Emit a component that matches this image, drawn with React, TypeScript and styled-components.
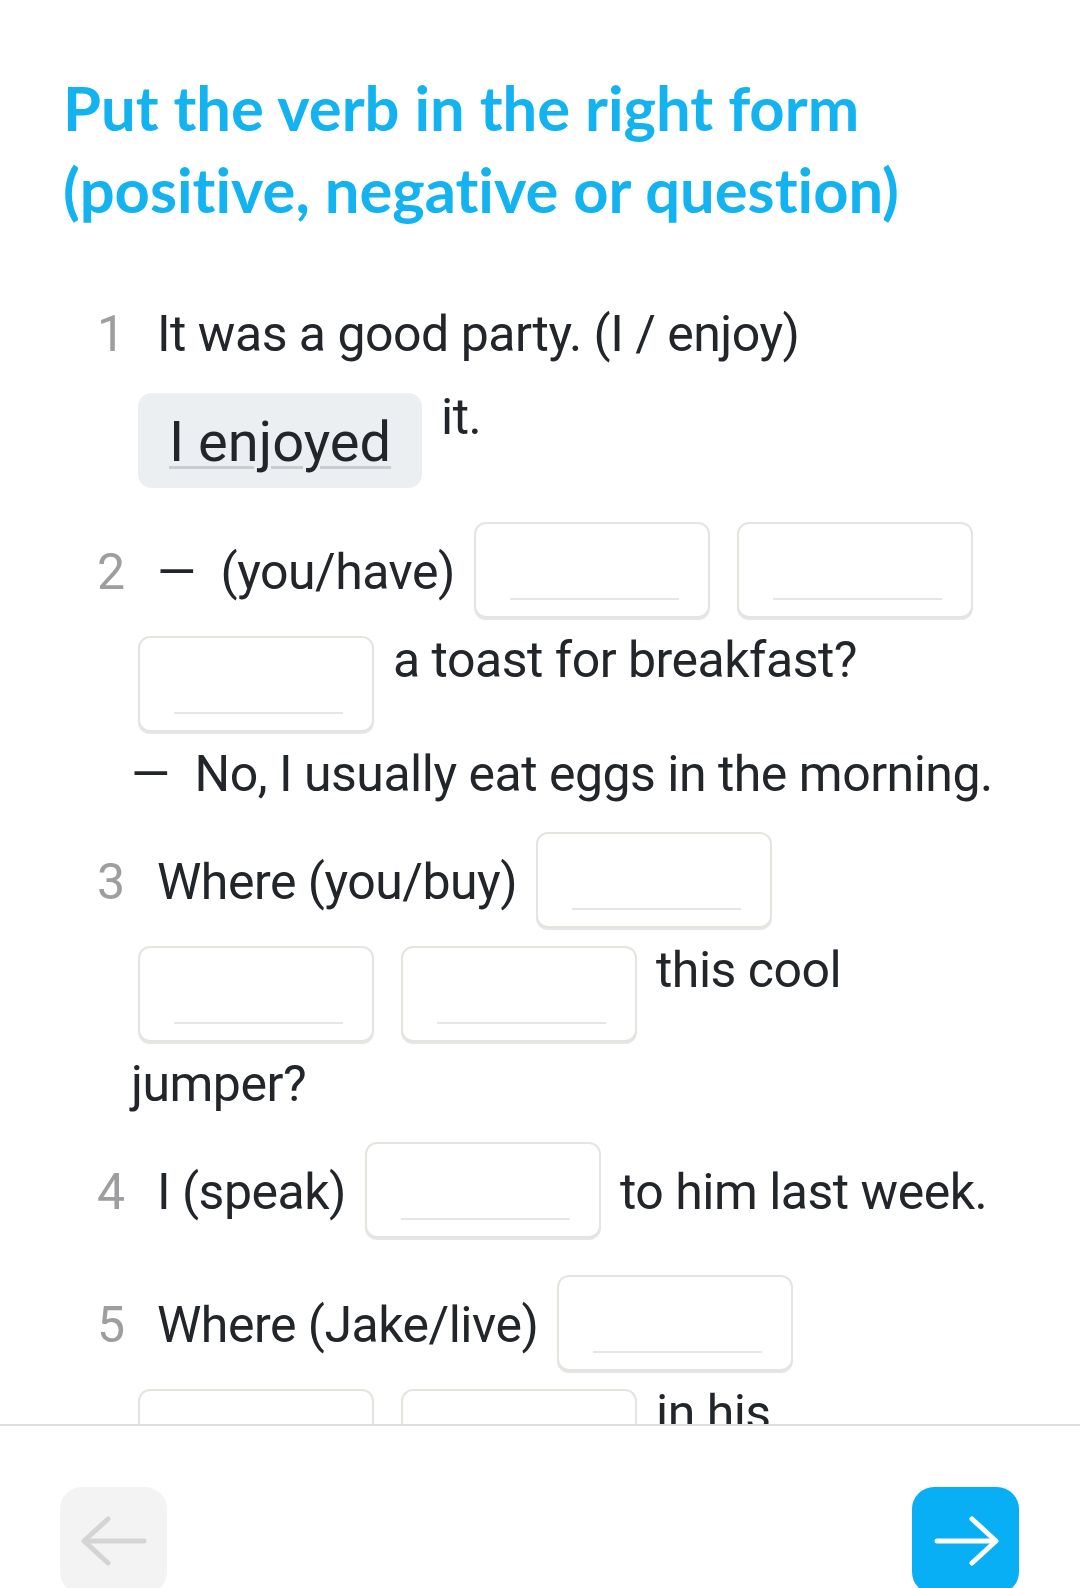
import React from "react";
import styled, { createGlobalStyle } from "styled-components";

const GlobalStyle = createGlobalStyle`
  html, body { margin: 0; padding: 0; background: #ffffff; }
  body { font-family: "Roboto", "Liberation Sans", sans-serif; }
  * { box-sizing: border-box; }
`;

const Page = styled.div`
  height: 100vh;
  display: flex;
  flex-direction: column;
  background: #ffffff;
  overflow: hidden;
`;

const Scroll = styled.main`
  flex: 1;
  overflow: hidden;
  padding: 66px 0 0 63px;
`;

const Title = styled.h1`
  margin: 0;
  font-family: "Lato", "Open Sans", sans-serif;
  font-weight: 700;
  font-size: 61.5px;
  line-height: 82px;
  color: #13b2f1;
  letter-spacing: 0;
  font-variant-ligatures: none;
  white-space: nowrap;
`;

const List = styled.div`
  display: flex;
  flex-direction: column;
  gap: 34px;
  margin-top: 60px;
`;

const Item = styled.section`
  display: flex;
  flex-direction: column;
  gap: 15px;
  padding-left: 75px;
`;

const Line = styled.div<{ $align: "center" | "start" }>`
  display: flex;
  flex-wrap: nowrap;
  column-gap: 19px;
  align-items: ${(p) => (p.$align === "center" ? "center" : "flex-start")};
  min-height: ${(p) => (p.$align === "center" ? "88px" : "0")};
`;

const Num = styled.span`
  flex-shrink: 0;
  width: 24px;
  margin-left: -41px;
  margin-right: 17px;
  text-align: right;
  font-family: "Roboto", "Liberation Sans", sans-serif;
  font-size: 50px;
  line-height: 48px;
  color: #9d9e9f;
`;

const Words = styled.span<{ $hang?: boolean }>`
  flex-shrink: 0;
  margin-left: ${(p) => (p.$hang ? "-7px" : "0")};
  font-size: 50px;
  line-height: 48px;
  letter-spacing: -0.5px;
  color: #22262a;
  white-space: nowrap;
`;

const Blank = styled.div`
  flex-shrink: 0;
  width: 236px;
  height: 96px;
  margin-bottom: 3px;
  border: 2px solid #e2e6df;
  border-radius: 12px;
  background: #ffffff;
  box-shadow: 0 2px 0 0 #e6e6e6;
  display: flex;
  flex-direction: column;
  justify-content: flex-end;
  padding: 0 29px 16px 34px;

  & + & {
    margin-left: 8px;
  }
`;

const BlankLine = styled.div`
  height: 2px;
  background: #e6e6e6;
`;

const Answer = styled.div`
  flex-shrink: 0;
  width: 284px;
  height: 95px;
  border-radius: 14px;
  background: #eceff2;
  display: flex;
  align-items: center;
  padding: 3px 0 0 31px;
`;

const AnswerText = styled.span`
  font-size: 56px;
  line-height: 60px;
  letter-spacing: 0;
  color: #22262a;
  text-decoration: underline;
  text-decoration-color: #c9cdd1;
  text-decoration-thickness: 3px;
  text-underline-offset: 5px;
  white-space: nowrap;
`;

const Footer = styled.footer`
  flex-shrink: 0;
  height: 164px;
  border-top: 2px solid #dddddd;
  padding: 61px 61px 0 60px;
  display: flex;
  justify-content: space-between;
  align-items: flex-start;
  overflow: hidden;
  background: #ffffff;
`;

const NavButton = styled.button<{ $primary?: boolean }>`
  flex-shrink: 0;
  width: 107px;
  height: 107px;
  border: none;
  border-radius: 22px;
  padding: 0;
  display: flex;
  align-items: center;
  justify-content: center;
  background: ${(p) => (p.$primary ? "#09aff4" : "#f3f3f3")};
  color: ${(p) => (p.$primary ? "#ffffff" : "#d4d4d4")};
  cursor: pointer;
`;

const Gap = () => (
  <Blank>
    <BlankLine />
  </Blank>
);

const ArrowIcon = ({ dir }: { dir: "left" | "right" }) => (
  <svg width="107" height="107" viewBox="0 0 107 107" fill="none">
    {dir === "right" ? (
      <g stroke="currentColor" strokeWidth="5" strokeLinecap="round" strokeLinejoin="round">
        <path d="M25 54 H83" />
        <path d="M60 32 L84 54 L60 76" />
      </g>
    ) : (
      <g stroke="currentColor" strokeWidth="5" strokeLinecap="round" strokeLinejoin="round">
        <path d="M84 54 H25" />
        <path d="M48 32 L24 54 L48 76" />
      </g>
    )}
  </svg>
);

export default function App() {
  return (
    <>
      <GlobalStyle />
      <Page>
        <Scroll>
          <Title>
            Put the verb in the right form
            <br />
            (positive, negative or question)
          </Title>
          <List>
            <Item>
              <Line $align="center">
                <Num>1</Num>
                <Words>It was a good party. (I / enjoy)</Words>
              </Line>
              <Line $align="start">
                <Answer>
                  <AnswerText>I enjoyed</AnswerText>
                </Answer>
                <Words>it.</Words>
              </Line>
            </Item>

            <Item>
              <Line $align="center">
                <Num>2</Num>
                <Words>{"\u2014\u2002(you/have)"}</Words>
                <Gap />
                <Gap />
              </Line>
              <Line $align="start">
                <Gap />
                <Words>a toast for breakfast?</Words>
              </Line>
              <Line $align="start">
                <Words $hang>{"\u2014\u2002No, I usually eat eggs in the morning."}</Words>
              </Line>
            </Item>

            <Item>
              <Line $align="center">
                <Num>3</Num>
                <Words>Where (you/buy)</Words>
                <Gap />
              </Line>
              <Line $align="start">
                <Gap />
                <Gap />
                <Words>this cool</Words>
              </Line>
              <Line $align="start">
                <Words $hang>jumper?</Words>
              </Line>
            </Item>

            <Item>
              <Line $align="center">
                <Num>4</Num>
                <Words>I (speak)</Words>
                <Gap />
                <Words>to him last week.</Words>
              </Line>
            </Item>

            <Item>
              <Line $align="center">
                <Num>5</Num>
                <Words>Where (Jake/live)</Words>
                <Gap />
              </Line>
              <Line $align="start">
                <Gap />
                <Gap />
                <Words>in his</Words>
              </Line>
            </Item>
          </List>
        </Scroll>
        <Footer>
          <NavButton aria-label="Back">
            <ArrowIcon dir="left" />
          </NavButton>
          <NavButton $primary aria-label="Next">
            <ArrowIcon dir="right" />
          </NavButton>
        </Footer>
      </Page>
    </>
  );
}
